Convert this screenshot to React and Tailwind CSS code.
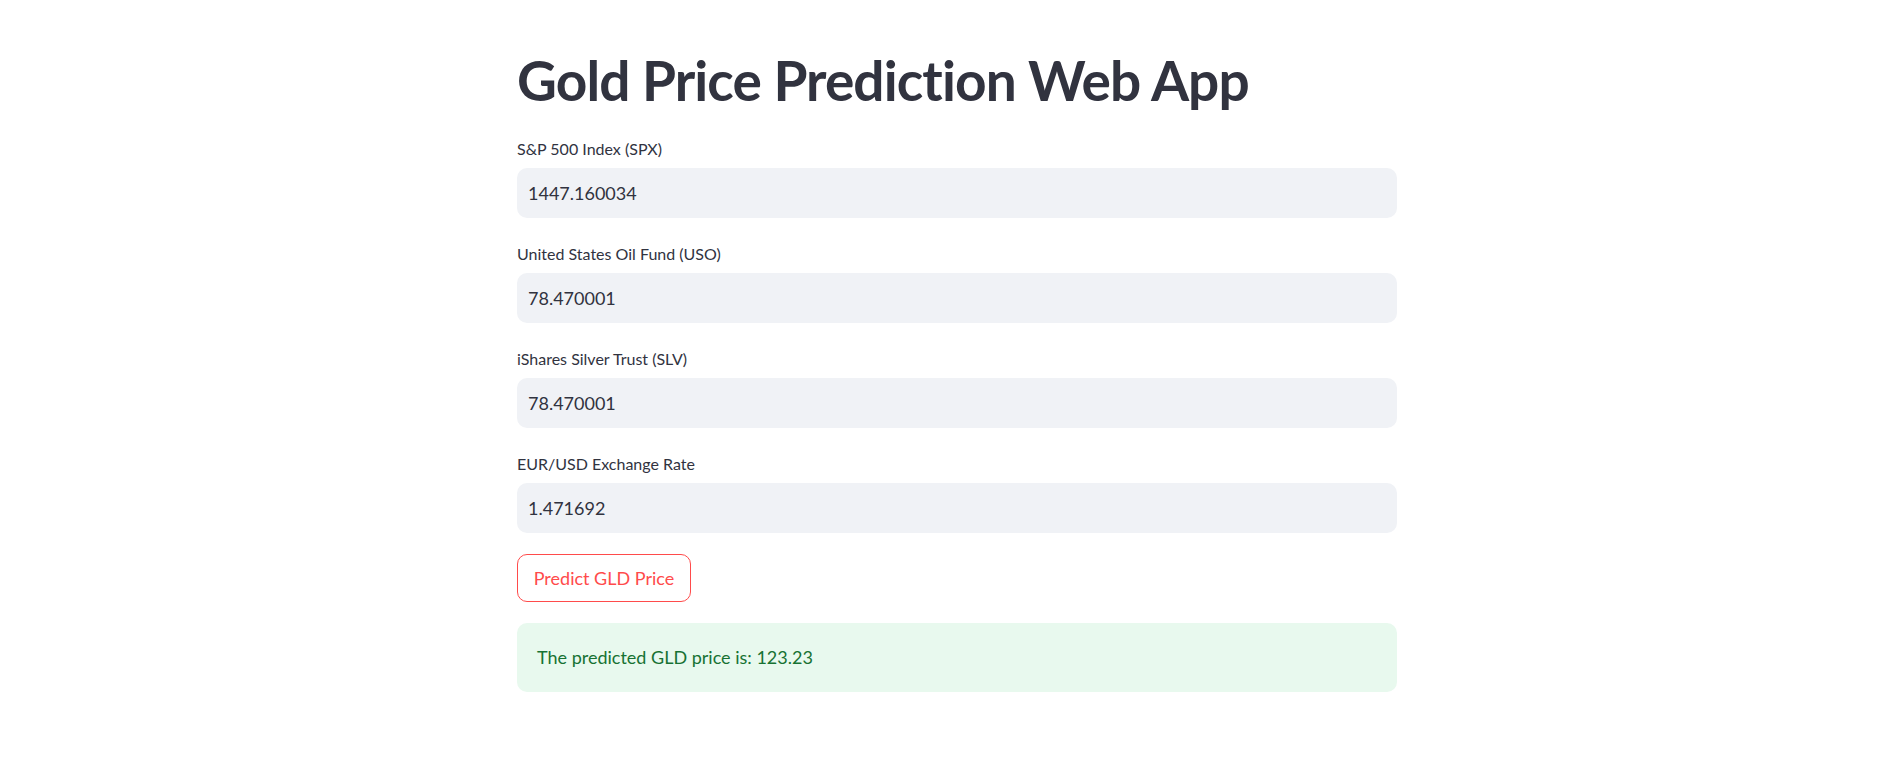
export default function App() {
  const fields = [
    { label: "S&P 500 Index (SPX)", value: "1447.160034" },
    { label: "United States Oil Fund (USO)", value: "78.470001" },
    { label: "iShares Silver Trust (SLV)", value: "78.470001" },
    { label: "EUR/USD Exchange Rate", value: "1.471692" },
  ];

  return (
    <div className="min-h-screen w-full bg-white text-[#31333f] font-['Lato','Noto_Sans',sans-serif]">
      <div className="ml-[517px] w-[880px] pt-[47px] flex flex-col gap-[22px]">
        <h1 className="text-[55px] leading-[66px] font-bold tracking-[-0.9px]">
          Gold Price Prediction Web App
        </h1>

        {fields.map((f) => (
          <div key={f.label} className="flex flex-col gap-[5px]">
            <label className="text-[16px] leading-[28px]">{f.label}</label>
            <div className="h-[50px] rounded-[10px] bg-[#f0f2f6] flex items-center px-[11px] text-[18px]">
              {f.value}
            </div>
          </div>
        ))}

        <div className="-mt-[1px]">
          <button className="h-[48px] w-[174px] rounded-[10px] border border-[#ff4b4b] text-[#ff4b4b] text-[18px] bg-white">
            Predict GLD Price
          </button>
        </div>

        <div className="-mt-[1px] h-[69px] rounded-[10px] bg-[#e8f9ee] flex items-center px-[20px] text-[18px] text-[#177233]">
          The predicted GLD price is: 123.23
        </div>
      </div>
    </div>
  );
}
